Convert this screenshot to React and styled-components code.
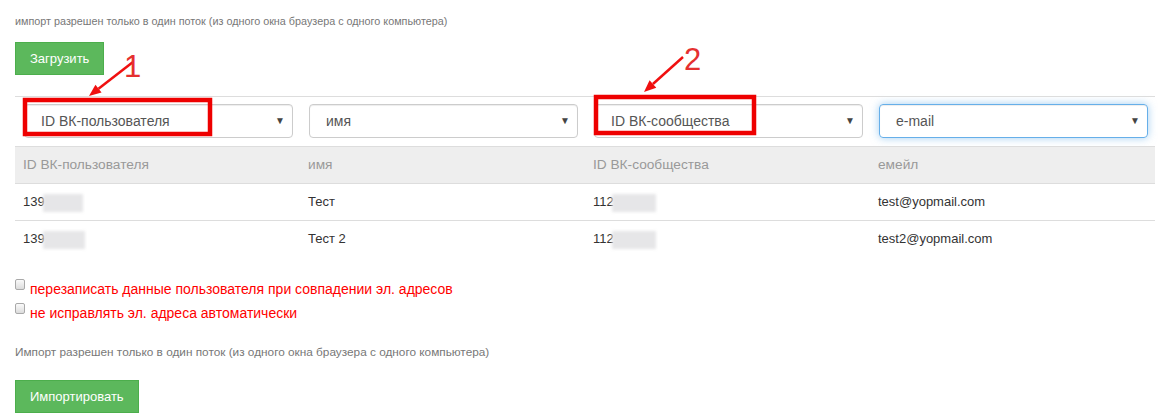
import React from 'react'
import styled, { createGlobalStyle } from 'styled-components'

const GlobalStyle = createGlobalStyle`
  html, body {
    margin: 0;
    padding: 0;
    background: #fff;
    font-family: "Liberation Sans", Arial, sans-serif;
    color: #333;
  }
`

const Page = styled.div`
  position: relative;
  width: 1172px;
  height: 415px;
  padding: 10px 0 0 15px;
  box-sizing: border-box;
  overflow: hidden;
`

const Note = styled.div`
  font-size: ${p => p.small ? '11.8px' : '10.8px'};
  line-height: 20px;
  color: #777;
  margin: ${p => p.small ? '17px 0 18px' : '1px 0 -1px'};
`

const GreenButton = styled.button`
  display: block;
  height: 33px;
  padding: 0 14px;
  margin-top: ${p => p.top || 0}px;
  border: 1px solid #4cae4c;
  border-radius: 0;
  background: #5cb85c;
  color: #fff;
  font-family: inherit;
  font-size: 13px;
`

const Table = styled.table`
  width: 1140px;
  margin-top: 21px;
  border-collapse: collapse;
  table-layout: fixed;
`

const Cell = styled.td`
  padding: ${p => p.pick ? '7px 9px 8px 9px' : '8px 8px'};
  border-top: 1px solid #ddd;
  font-size: 13px;
  line-height: 20px;
  color: #333;
  white-space: nowrap;
`

const HeadCell = styled.th`
  padding: 8px 8px;
  border-top: 1px solid #ddd;
  background: #eee;
  font-size: 13.7px;
  font-weight: normal;
  line-height: 20px;
  text-align: left;
  color: #999;
`

const Select = styled.div`
  display: flex;
  align-items: center;
  justify-content: space-between;
  height: 34px;
  box-sizing: border-box;
  padding: 0 7px 0 16px;
  border: 1px solid ${p => p.focus ? '#66afe9' : '#ccc'};
  border-radius: 4px;
  box-shadow: ${p => p.focus
    ? 'inset 0 1px 1px rgba(0,0,0,.075), 0 0 8px rgba(102,175,233,.6)'
    : 'inset 0 1px 1px rgba(0,0,0,.075)'};
  font-size: 14px;
  color: #555;
  margin-right: -2px;
`

const Caret = styled.span`
  font-size: 10px;
  color: #444;
`

const Blur = styled.span`
  display: inline-block;
  width: ${p => p.w}px;
  height: 18px;
  margin-left: -2px;
  vertical-align: middle;
  background: #e6e6e8;
  filter: blur(1.5px);
`

const Options = styled.div`
  margin-top: 20px;
  display: flex;
  flex-direction: column;
`

const OptionRow = styled.label`
  display: flex;
  align-items: center;
  gap: 5px;
  height: 24px;
  font-size: 14px;
  color: #f00;
`

const Box = styled.span`
  width: 8px;
  height: 9px;
  border: 1px solid #a9a9a9;
  border-radius: 2px;
  background: linear-gradient(#fafafa, #dcdcdc);
  margin-top: -9px;
`

const Overlay = styled.svg`
  position: absolute;
  left: 0;
  top: 0;
  pointer-events: none;
`

const columns = [
  { pick: 'ID ВК-пользователя', head: 'ID ВК-пользователя' },
  { pick: 'имя', head: 'имя' },
  { pick: 'ID ВК-сообщества', head: 'ID ВК-сообщества' },
  { pick: 'e-mail', head: 'емейл', focus: true },
]

const rows = [
  { uid: '139', uw: 40, name: 'Тест', gid: '112', gw: 44, mail: 'test@yopmail.com' },
  { uid: '139', uw: 42, name: 'Тест 2', gid: '112', gw: 44, mail: 'test2@yopmail.com' },
]

function Arrow ({ x1, y1, x2, y2 }) {
  const a = Math.atan2(y2 - y1, x2 - x1)
  const len = 12
  const w = 5
  const bx = x2 - Math.cos(a) * len
  const by = y2 - Math.sin(a) * len
  const px = -Math.sin(a) * w
  const py = Math.cos(a) * w
  return (
    <g>
      <line x1={x1} y1={y1} x2={bx} y2={by} stroke="#f01010" strokeWidth="2.5" />
      <polygon points={`${x2},${y2} ${bx + px},${by + py} ${bx - px},${by - py}`} fill="#f01010" />
    </g>
  )
}

export default function App () {
  return (
    <Page>
      <GlobalStyle />
      <Note>импорт разрешен только в один поток (из одного окна браузера с одного компьютера)</Note>
      <GreenButton top={12}>Загрузить</GreenButton>
      <Table>
        <tbody>
          <tr>
            {columns.map(c => (
              <Cell key={c.pick} pick>
                <Select focus={c.focus}>
                  <span>{c.pick}</span>
                  <Caret>▼</Caret>
                </Select>
              </Cell>
            ))}
          </tr>
          <tr>
            {columns.map(c => <HeadCell key={c.head}>{c.head}</HeadCell>)}
          </tr>
          {rows.map((r, i) => (
            <tr key={i}>
              <Cell>{r.uid}<Blur w={r.uw} /></Cell>
              <Cell>{r.name}</Cell>
              <Cell>{r.gid}<Blur w={r.gw} /></Cell>
              <Cell>{r.mail}</Cell>
            </tr>
          ))}
        </tbody>
      </Table>
      <Options>
        <OptionRow><Box />перезаписать данные пользователя при совпадении эл. адресов</OptionRow>
        <OptionRow><Box />не исправлять эл. адреса автоматически</OptionRow>
      </Options>
      <Note small>Импорт разрешен только в один поток (из одного окна браузера с одного компьютера)</Note>
      <GreenButton>Импортировать</GreenButton>

      <Overlay width="1172" height="415">
        <rect x="25" y="100" width="185" height="34" fill="none" stroke="#e00" strokeWidth="4.5" />
        <rect x="596" y="97" width="158" height="36" fill="none" stroke="#e00" strokeWidth="4.5" />
        <Arrow x1={133} y1={62} x2={89} y2={96} />
        <Arrow x1={683} y1={57} x2={644} y2={92} />
        <text x="124" y="77" fill="#e53030" fontSize="31" fontFamily="Liberation Sans, Arial, sans-serif">1</text>
        <text x="684" y="70" fill="#e53030" fontSize="31" fontFamily="Liberation Sans, Arial, sans-serif">2</text>
      </Overlay>
    </Page>
  )
}
